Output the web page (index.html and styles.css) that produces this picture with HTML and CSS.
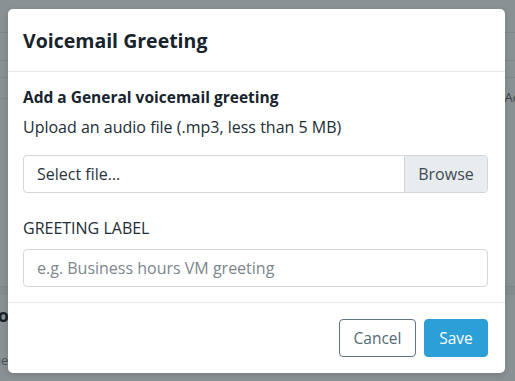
FILE: index.html
```html
<!DOCTYPE html>
<html lang="en">
<head>
    <meta charset="UTF-8">
    <meta name="viewport" content="width=device-width, initial-scale=1.0">
    <title>Voicemail Greeting</title>
    <link rel="stylesheet" href="styles.css">
</head>
<body>
    <!-- Страница за модалкой -->
    <div class="page">
        <div class="page-row row-1"></div>
        <div class="page-row row-2"></div>
        <div class="page-row row-3"><span class="page-text">Ac</span></div>
        <div class="page-row row-4"></div>
        <div class="page-band"></div>
        <div class="page-title">Vo</div>
        <div class="page-note">ne</div>
    </div>

    <!-- Модалка -->
    <div class="backdrop">
        <div class="modal">
            <div class="modal-header">
                <h2 class="modal-title">Voicemail Greeting</h2>
            </div>
            <div class="modal-body">
                <p class="section-title">Add a General voicemail greeting</p>
                <p class="section-hint">Upload an audio file (.mp3, less than 5 MB)</p>
                <div class="file-group">
                    <span class="file-name">Select file…</span>
                    <span class="file-browse">Browse</span>
                </div>
                <label class="field-label" for="greeting-label">GREETING LABEL</label>
                <input class="field-input" id="greeting-label" type="text" placeholder="e.g. Business hours VM greeting">
            </div>
            <div class="modal-footer">
                <button class="btn btn-cancel">Cancel</button>
                <button class="btn btn-save">Save</button>
            </div>
        </div>
    </div>
</body>
</html>
```

FILE: styles.css
```css
body {
    margin: 0;
    padding: 0;
    font-family: 'Open Sans', 'Lato', sans-serif;
    background-color: #8a9194;
    height: 381px;
    overflow: hidden;
}

/* Страница под затемнением */
.page {
    position: relative;
    height: 381px;
}

.page-row {
    border-bottom: 1px solid #7f8689;
}

.row-1 { height: 32px; }
.row-2 { height: 27px; }
.row-3 { height: 16px; position: relative; }
.row-4 { height: 41px; border-bottom: none; border-top: 1px solid #7f8689; margin-top: 20px; }

.page-text {
    position: absolute;
    right: -4px;
    top: 27px;
    font-size: 13px;
    color: #3c4448;
}

.page-band {
    margin-top: 146px;
    height: 8px;
    background-color: #848b8e;
    border-top: 1px solid #7f8689;
}

.page-title {
    margin-top: 8px;
    margin-left: -14px;
    font-size: 18px;
    font-weight: 700;
    color: #1a2226;
}

.page-note {
    margin-top: 24px;
    margin-left: -7px;
    font-size: 13px;
    color: #4a5256;
}

/* Модалка */
.backdrop {
    position: absolute;
    top: 9px;
    left: 8px;
}

.modal {
    width: 497px;
    background-color: #fff;
    border-radius: 5px;
    box-shadow: 0 2px 6px rgba(0, 0, 0, 0.15);
}

.modal-header {
    height: 62px;
    padding: 0 16px 0 15px;
    display: flex;
    align-items: center;
    border-bottom: 1px solid #e6e9ec;
}

.modal-title {
    margin: 0;
    font-size: 19.5px;
    font-weight: 700;
    color: #17242d;
}

.modal-body {
    padding: 15px 17px 15px 15px;
}

.section-title {
    margin: 0;
    font-size: 15.5px;
    line-height: 20px;
    font-weight: 700;
    color: #17242d;
}

.section-hint {
    margin: 10px 0 0;
    font-size: 16px;
    line-height: 20px;
    color: #222d34;
}

.file-group {
    margin-top: 18px;
    height: 38px;
    display: flex;
    border: 1px solid #d2d7dc;
    border-radius: 4px;
    box-sizing: border-box;
    overflow: hidden;
    font-size: 16px;
}

.file-name {
    flex: 1;
    display: flex;
    align-items: center;
    padding-left: 13px;
    color: #2a343a;
}

.file-browse {
    width: 82px;
    display: flex;
    align-items: center;
    justify-content: center;
    background-color: #e9ecef;
    border-left: 1px solid #d2d7dc;
    color: #3e4a52;
}

.field-label {
    display: block;
    margin-top: 25px;
    font-size: 16px;
    line-height: 20px;
    color: #222d34;
}

.field-input {
    display: block;
    margin-top: 11px;
    width: 100%;
    height: 38px;
    box-sizing: border-box;
    border: 1px solid #d2d7dc;
    border-radius: 4px;
    padding: 0 13px;
    font-family: inherit;
    font-size: 16px;
    color: #222d34;
}

.field-input::placeholder {
    color: #7b868d;
}

.modal-footer {
    border-top: 1px solid #e6e9ec;
    padding: 16px 17px 16px 15px;
    display: flex;
    justify-content: flex-end;
    gap: 8px;
}

.btn {
    height: 38px;
    border-radius: 4px;
    font-family: inherit;
    font-size: 15.5px;
    cursor: pointer;
}

.btn-cancel {
    width: 77px;
    background-color: #fff;
    border: 1px solid #5f7886;
    color: #546a77;
}

.btn-save {
    width: 64px;
    background-color: #2b9fd6;
    border: 1px solid #2b9fd6;
    color: #fff;
}
```
